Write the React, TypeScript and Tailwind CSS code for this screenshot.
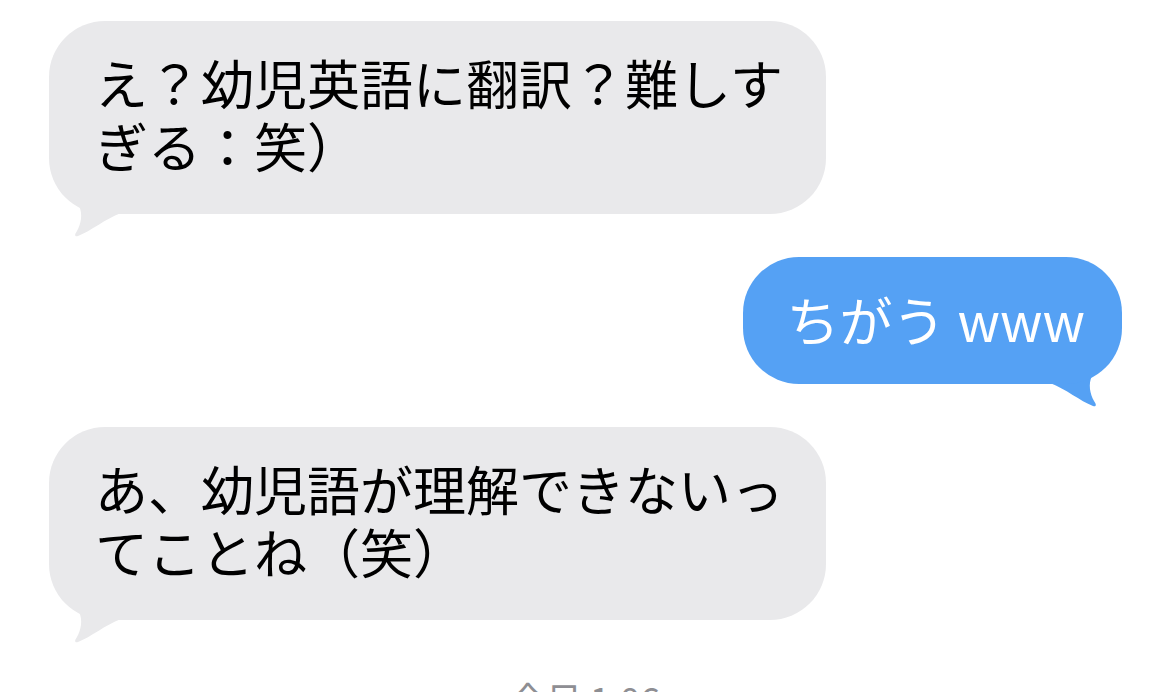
const JP = "font-['Noto_Sans_CJK_JP','Noto_Sans',sans-serif]";

function Tail({ color, flip }: { color: string; flip?: boolean }) {
  return (
    <svg
      width="80"
      height="64"
      viewBox="0 0 80 64"
      className={flip ? "absolute right-0 bottom-[-24px] -scale-x-100" : "absolute left-0 bottom-[-24px]"}
      aria-hidden="true"
    >
      <path
        d="M3 0 L6 6 C9 16 22 24 30 32 C34 40 32 50 28 57 C25 61 26 63 29 62 C42 57 56 45 72 39 L80 39 L80 0 Z"
        fill={color}
      />
    </svg>
  );
}

function Incoming({ text }: { text: string }) {
  return (
    <div className="relative w-fit max-w-[777px] ml-[49px]">
      <div className={`relative z-10 rounded-[56px] bg-[#e9e9eb] pl-[46px] pr-[36px] pt-[30px] pb-[37px] text-[53px] leading-[63px] text-black ${JP}`}>
        {text}
      </div>
      <Tail color="#e9e9eb" />
    </div>
  );
}

function Outgoing({ text }: { text: string }) {
  return (
    <div className="relative w-fit ml-auto mr-[48px]">
      <div className={`relative z-10 rounded-[56px] bg-[#55a1f4] pl-[44px] pr-[37px] pt-[31px] pb-[33px] text-[53px] leading-[63px] text-white ${JP}`}>
        {text}
      </div>
      <Tail color="#55a1f4" flip />
    </div>
  );
}

export default function App() {
  return (
    <div className="w-[1170px] h-[692px] overflow-hidden bg-white flex flex-col pt-[21px]">
      <Incoming text="え？幼児英語に翻訳？難しすぎる：笑）" />
      <div className="mt-[43px]">
        <Outgoing text="ちがう www" />
      </div>
      <div className="mt-[43px]">
        <Incoming text="あ、幼児語が理解できないってことね（笑）" />
      </div>
      <div className={`mt-[54px] text-center text-[36px] leading-[48px] text-[#8e8e93] ${JP}`}>
        今日 1:06
      </div>
    </div>
  );
}
